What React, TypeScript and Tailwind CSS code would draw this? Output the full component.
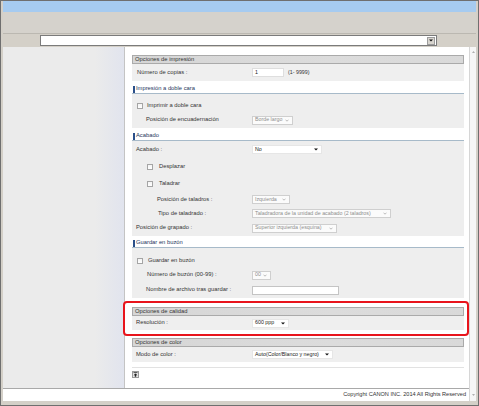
import React from "react";

function Arrow({ dark }: { dark?: boolean }) {
  return dark ? (
    <svg width="4" height="3" viewBox="0 0 4 3" className="shrink-0">
      <polygon points="0,0.5 4,0.5 2,2.5" fill="#111" />
    </svg>
  ) : (
    <svg width="4" height="3" viewBox="0 0 4 3" className="shrink-0">
      <polyline points="0.5,0.7 2,2.2 3.5,0.7" fill="none" stroke="#a0a0a0" strokeWidth="0.7" />
    </svg>
  );
}

function Select({ w, text, disabled }: { w: string; text: string; disabled?: boolean }) {
  return (
    <div
      className={
        "h-[9px] shrink-0 flex items-center justify-between pl-[2px] pr-[3px] border whitespace-nowrap overflow-hidden text-[5.3px] " +
        w +
        (disabled
          ? " border-[#cfcfcf] bg-[#fbfbfb] text-[#8e8e8e]"
          : " border-[#e6e6e6] bg-white text-[#222]")
      }
    >
      <span>{text}</span>
      <Arrow dark={!disabled} />
    </div>
  );
}

function Check() {
  return (
    <div className="w-[6px] h-[6px] shrink-0 border border-[#a5a5a5] bg-[linear-gradient(to_bottom,#f4f4f4,#ffffff)]" />
  );
}

function Header({ children }: { children: React.ReactNode }) {
  return (
    <div className="h-[9px] border border-[#aaaaaa] bg-[linear-gradient(to_right,#d6d6d6,#dcdcdc_60%,#d9d9d9)] pl-[2px] flex items-center text-[#333]">
      {children}
    </div>
  );
}

function Title({ children, mt }: { children: React.ReactNode; mt: string }) {
  return (
    <div className={"h-[9px] border-b border-[#a7bac9] flex items-center text-[#1d355c] " + mt}>
      <span className="w-[2px] h-[7px] bg-[#2a4f8a] ml-[1px] mr-[1px] shrink-0" />
      {children}
    </div>
  );
}

export default function App() {
  return (
    <div className="w-[479px] h-[406px] border border-[#6f6f6f] bg-[#d4d0c8] px-[2px] pb-[4px] flex flex-col font-['Liberation_Sans',Arial,sans-serif] text-[5.8px] leading-none text-[#333]">
      <div className="h-[11px] shrink-0 bg-[#a6cbf0]" />
      <div className="h-[22px] shrink-0 border-b border-[#bbb8b1] bg-[#d5d2cc]" />
      <div className="h-[13px] shrink-0 flex items-center pl-[37px]">
        <div className="w-[397px] h-[11px] bg-white border border-[#7b7b7b] flex items-center justify-end pr-[1px]">
          <div className="w-[8px] h-[8px] bg-[#d8d5cf] border border-[#9c9c9c] flex items-center justify-center">
            <svg width="4" height="3" viewBox="0 0 4 3">
              <polygon points="0,0.5 4,0.5 2,2.5" fill="#111" />
            </svg>
          </div>
        </div>
      </div>
      <div className="flex-1 flex min-h-0">
        <div className="flex-1 flex flex-col min-w-0">
          <div className="flex-1 flex min-h-0">
            <div className="w-[121px] shrink-0 bg-[linear-gradient(to_right,#ebebeb_0%,#ebebeb_76%,#e1e4ee_100%)]" />
            <div className="flex-1 bg-white border-l border-[#c4c4c4] pt-[8px] pl-[7px] pr-[5px] flex flex-col">
              <Header>Opciones de impresión</Header>
              <div className="h-[17px] bg-[#efefef] flex items-center">
                <div className="w-[120px] pl-[5px]">Número de copias :</div>
                <div className="w-[32px] h-[9px] bg-white border border-[#dedede] pl-[2px] flex items-center text-[#222] text-[5.3px]">1</div>
                <span className="ml-[4px] text-[5.3px]">(1- 9999)</span>
              </div>

              <Title mt="mt-[4px]">Impresión a doble cara</Title>
              <div className="bg-[#eeeeee] pt-[5px] pb-[1px]">
                <div className="h-[14px] flex items-center pl-[5px]">
                  <Check />
                  <span className="ml-[4px]">Imprimir a doble cara</span>
                </div>
                <div className="h-[14px] flex items-center">
                  <div className="w-[120px] pl-[14px]">Posición de encuadernación</div>
                  <Select w="w-[41px]" text="Borde largo" disabled />
                </div>
              </div>

              <Title mt="mt-[4px]">Acabado</Title>
              <div className="bg-[#eeeeee]">
                <div className="h-[17px] flex items-center">
                  <div className="w-[120px] pl-[4px]">Acabado :</div>
                  <Select w="w-[70px]" text="No" />
                </div>
                <div className="h-[17px] flex items-center pl-[15px]">
                  <Check />
                  <span className="ml-[6px]">Desplazar</span>
                </div>
                <div className="h-[17px] flex items-center pl-[15px]">
                  <Check />
                  <span className="ml-[6px]">Taladrar</span>
                </div>
                <div className="h-[15px] flex items-center">
                  <div className="w-[120px] pl-[25px]">Posición de taladros :</div>
                  <Select w="w-[38px]" text="Izquierda" disabled />
                </div>
                <div className="h-[13px] flex items-center">
                  <div className="w-[120px] pl-[26px]">Tipo de taladrado :</div>
                  <Select w="w-[139px]" text="Taladradora de la unidad de acabado (2 taladros)" disabled />
                </div>
                <div className="h-[16px] flex items-center">
                  <div className="w-[120px] pl-[4px]">Posición de grapado :</div>
                  <Select w="w-[85px]" text="Superior izquierda (esquina)" disabled />
                </div>
              </div>

              <Title mt="mt-[3px]">Guardar en buzón</Title>
              <div className="bg-[#eeeeee] pt-[5px]">
                <div className="h-[15px] flex items-center pl-[5px]">
                  <Check />
                  <span className="ml-[5px]">Guardar en buzón</span>
                </div>
                <div className="h-[14px] flex items-center">
                  <div className="w-[120px] pl-[15px]">Número de buzón (00-99) :</div>
                  <Select w="w-[19px]" text="00" disabled />
                </div>
                <div className="h-[16px] flex items-center">
                  <div className="w-[120px] pl-[14px]">Nombre de archivo tras guardar :</div>
                  <div className="w-[87px] h-[9px] bg-white border border-[#c4c4c4]" />
                </div>
              </div>

              <div className="mt-[3px] ml-[-9px] mr-[-5px] border-2 border-[#e8141c] rounded-[4px] pt-[4px] pb-[4px] pl-[7px] pr-[3px]">
                <Header>Opciones de calidad</Header>
                <div className="h-[14px] bg-[#efefef] flex items-center">
                  <div className="w-[120px] pl-[4px]">Resolución :</div>
                  <Select w="w-[37px]" text="600 ppp" />
                </div>
              </div>

              <div className="mt-[2px]">
                <Header>Opciones de color</Header>
              </div>
              <div className="h-[15px] bg-[#efefef] flex items-center">
                <div className="w-[120px] pl-[4px]">Modo de color :</div>
                <Select w="w-[81px]" text="Auto(Color/Blanco y negro)" />
              </div>

              <div className="mt-[5px] h-px bg-[#e2e2e2]" />
              <div className="mt-[3px] w-[7px] h-[7px] border border-[#9a9a9a] bg-[#e9e9e9] flex items-center justify-center">
                <svg width="5" height="5" viewBox="0 0 5 5">
                  <rect x="0.5" y="0.3" width="4" height="0.8" fill="#222" />
                  <polygon points="2.5,1.5 4.5,3.2 3.2,3.2 3.2,4.7 1.8,4.7 1.8,3.2 0.5,3.2" fill="#222" />
                </svg>
              </div>
            </div>
          </div>
          <div className="h-[13px] shrink-0 bg-white border-t border-[#a9a9a9] flex items-center justify-end pr-[3px] text-[#333] text-[5.6px]">
            Copyright CANON INC. 2014 All Rights Reserved
          </div>
        </div>
        <div className="w-[7px] shrink-0 bg-[#f6f6f6] border-l border-[#d6d6d6] flex flex-col items-center justify-between pt-[4px] pb-[5px]">
          <svg width="3" height="2" viewBox="0 0 3 2">
            <polygon points="0,2 3,2 1.5,0" fill="#b0b0b0" />
          </svg>
          <svg width="3" height="2" viewBox="0 0 3 2">
            <polygon points="0,0 3,0 1.5,2" fill="#b0b0b0" />
          </svg>
        </div>
      </div>
    </div>
  );
}
